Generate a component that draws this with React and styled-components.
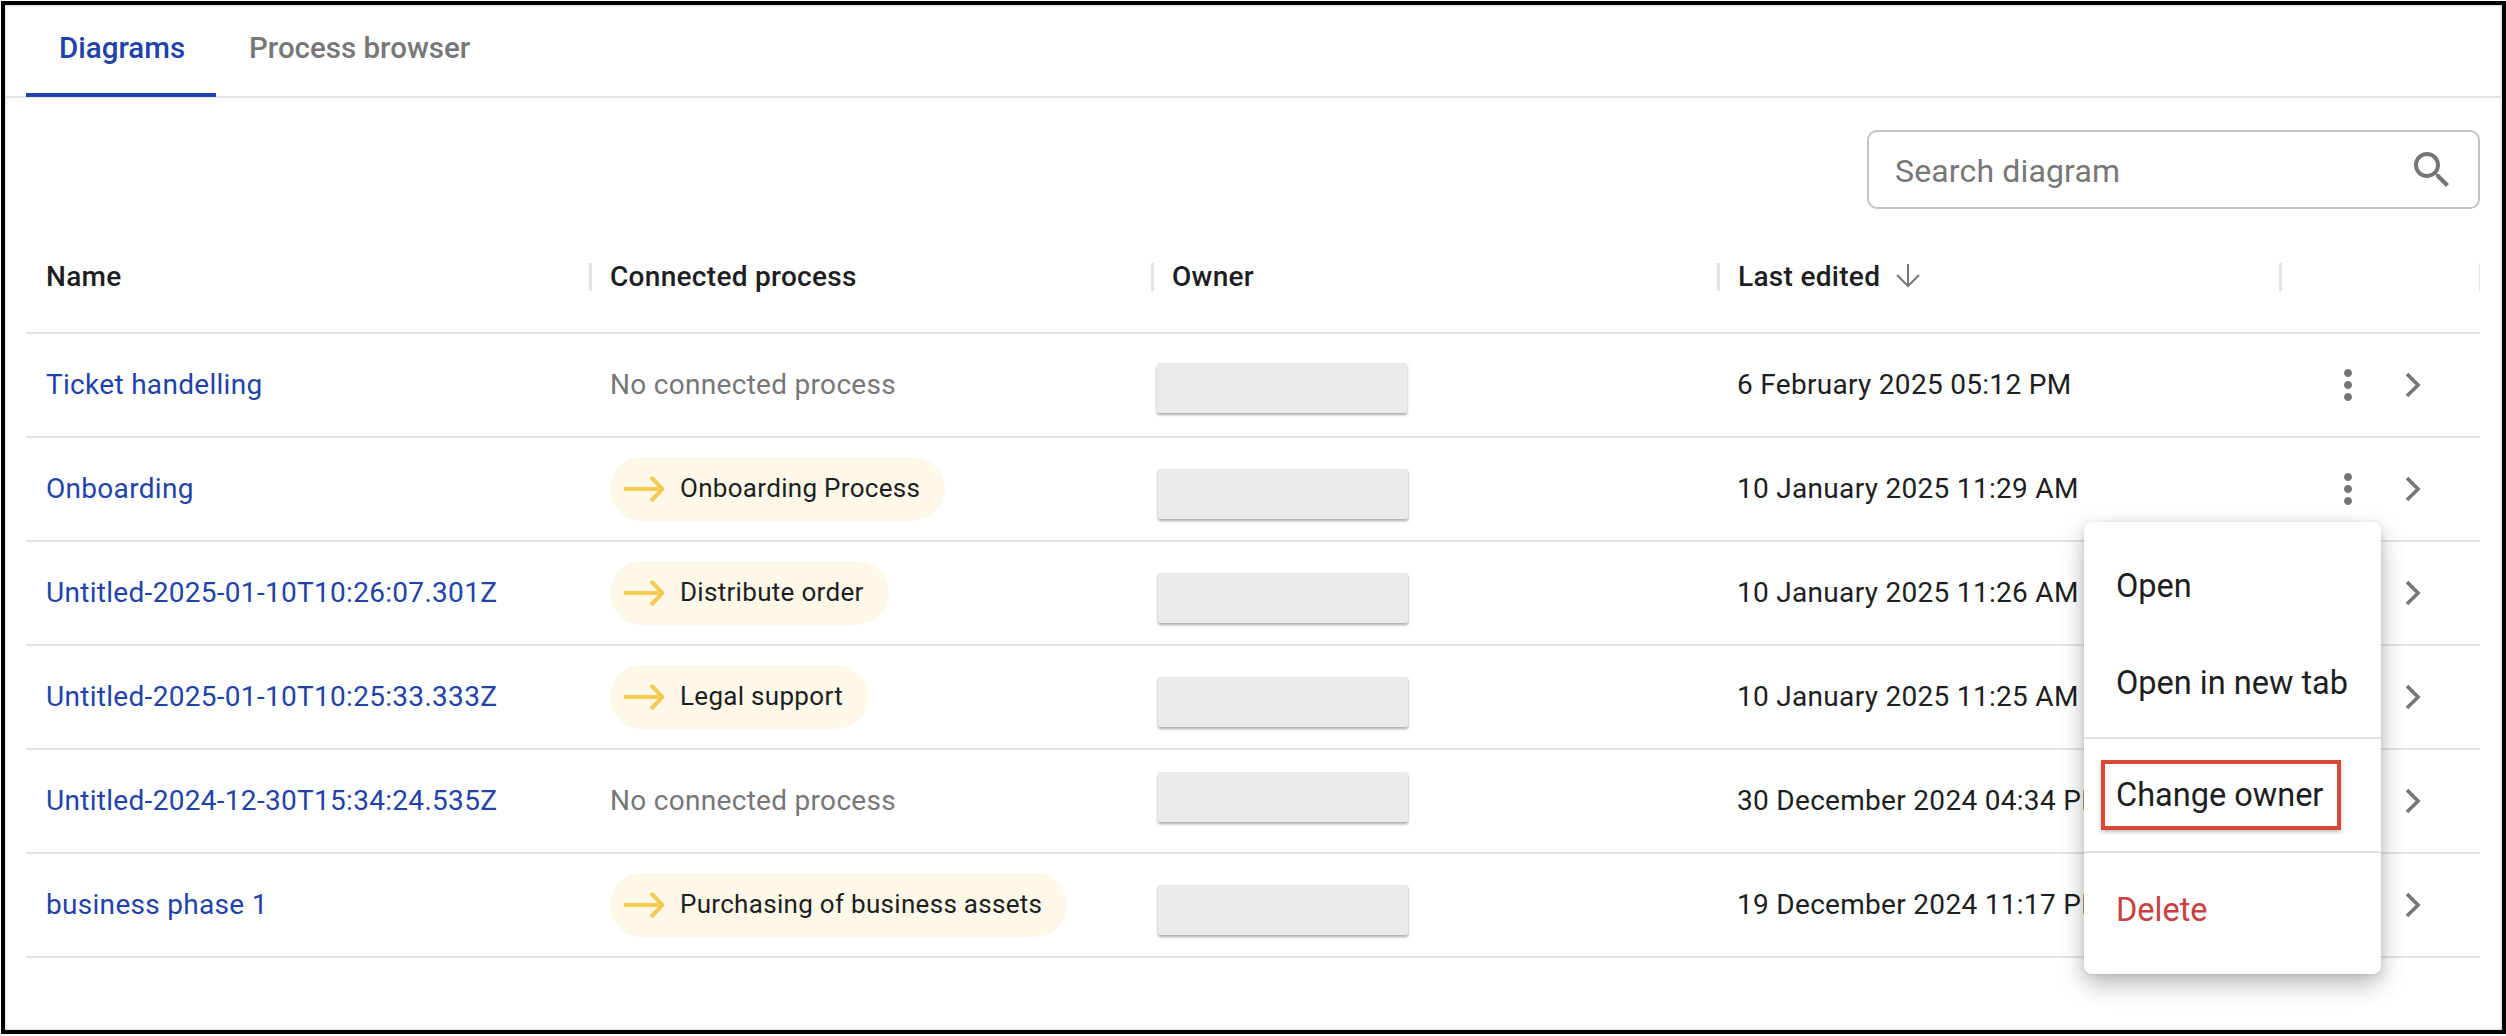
import React from "react";
import styled, { createGlobalStyle } from "styled-components";

const Global = createGlobalStyle`
  html, body { margin: 0; padding: 0; background: #fff; }
  * { box-sizing: border-box; }
  body { font-family: Roboto, "Liberation Sans", sans-serif; color: #1d1e22; overflow: hidden; }
`;

const Frame = styled.div`
  width: 2505px;
  height: 1033px;
  margin: 1px 0 0 1px;
  border: 4px solid #000;
  box-shadow: 0 2px 0 #c8c8c8, inset 0 0 3px rgba(0, 0, 0, 0.3);
  position: relative;
  overflow: visible;
`;

const TabBar = styled.div`
  display: flex;
  height: 93px;
  padding-left: 21px;
  border-bottom: 2px solid #e2e2e2;
`;

const Tab = styled.div`
  height: 92px;
  width: ${(p) => (p.$active ? "190px" : "auto")};
  padding: 0 33px 2px;
  display: flex;
  align-items: center;
  font-size: 29.5px;
  font-weight: 500;
  white-space: nowrap;
  color: ${(p) => (p.$active ? "#1f43a8" : "#777")};
  border-bottom: 4px solid ${(p) => (p.$active ? "#1f43a8" : "transparent")};
`;

const Content = styled.div`
  padding: 0 22px 0 21px;
`;

const Toolbar = styled.div`
  display: flex;
  justify-content: flex-end;
  height: 124px;
  padding-top: 32px;
`;

const SearchBox = styled.div`
  width: 613px;
  height: 79px;
  border: 2px solid #c4c4c4;
  border-radius: 10px;
  display: flex;
  align-items: center;
  justify-content: space-between;
  padding: 0 22px 0 26px;
  font-size: 32px;
  letter-spacing: 0.15px;
  color: #777;
`;

const SearchText = styled.span`
  padding-top: 2px;
`;

const Row = styled.div`
  display: grid;
  grid-template-columns: 563px 562px 566px 562px 201px;
  height: ${(p) => (p.$head ? "112px" : "104px")};
  border-bottom: 2px solid #e2e2e2;
  align-items: center;
  font-size: 28px;
  letter-spacing: 0.3px;
`;

const HeadCell = styled.div`
  height: 28px;
  padding-bottom: 2px;
  display: flex;
  align-items: center;
  gap: 16px;
  font-weight: 500;
  padding-left: ${(p) => (p.$first ? "20px" : "18px")};
  border-left: ${(p) => (p.$first ? "none" : "3px solid #e4e4e4")};
`;

const ActionHead = styled(HeadCell)`
  border-right: 1px solid #e4e4e4;
`;

const NameLink = styled.div`
  padding: 0 0 2px 20px;
  color: #1f43a8;
`;

const ProcessCell = styled.div`
  padding-left: 21px;
  display: flex;
  align-items: center;
`;

const Muted = styled.span`
  padding-bottom: 2px;
  color: #777;
`;

const Pill = styled.div`
  height: 64px;
  display: inline-flex;
  align-items: center;
  gap: 16px;
  padding: 0 25px 0 14px;
  border-radius: 32px;
  background: #fdf8e8;
  font-size: 26px;
`;

const PillLabel = styled.span`
  padding-bottom: 2px;
`;

const OwnerCell = styled.div`
  padding-left: ${(p) => 6 + (p.$nudge || 0)}px;
  align-self: start;
  padding-top: ${(p) => p.$top}px;
`;

const Redacted = styled.div`
  width: 250px;
  height: 50px;
  background: #eaeaea;
  box-shadow: 0 2px 3px rgba(0, 0, 0, 0.35);
  border-radius: 2px;
`;

const DateCell = styled.div`
  padding: 0 0 2px 20px;
  white-space: nowrap;
`;

const ActionCell = styled.div`
  display: flex;
  align-items: center;
  padding-left: 45px;
  gap: 17px;
`;

const Menu = styled.div`
  position: absolute;
  left: 2079px;
  top: 517px;
  width: 297px;
  height: 452px;
  background: #fff;
  border-radius: 8px;
  box-shadow: 0 10px 24px rgba(0, 0, 0, 0.28), 0 1px 6px rgba(0, 0, 0, 0.1);
  display: flex;
  flex-direction: column;
  font-size: 32.5px;
`;

const MenuGroup = styled.div`
  height: ${(p) => p.$h}px;
  padding-top: ${(p) => p.$pad || 0}px;
  border-bottom: ${(p) => (p.$line ? "2px solid #e2e2e2" : "none")};
  display: flex;
  flex-direction: column;
`;

const MenuItem = styled.div`
  height: ${(p) => p.$h || 97}px;
  padding-left: 32px;
  display: flex;
  align-items: center;
  color: ${(p) => (p.$danger ? "#c94040" : "#1d1e22")};
  position: relative;
`;

const Highlight = styled.div`
  position: absolute;
  left: 17px;
  top: 21px;
  width: 240px;
  height: 70px;
  border: 4px solid #d94a34;
  box-shadow: 0 2px 4px rgba(0, 0, 0, 0.25);
`;

const ArrowRight = () => (
  <svg width="40" height="26" viewBox="0 0 40 26" fill="none" stroke="#f4cb52" strokeWidth="4">
    <path d="M0 13H38" />
    <path d="M27 1L38.5 13L27 25" />
  </svg>
);

const ArrowDown = () => (
  <svg width="24" height="24" viewBox="0 0 24 24" fill="none" stroke="#777" strokeWidth="2">
    <path d="M12 0V22" />
    <path d="M1 11L12 22L23 11" />
  </svg>
);

const Kebab = () => (
  <svg width="48" height="48" viewBox="0 0 24 24" fill="#757575">
    <path d="M12 8c1.1 0 2-.9 2-2s-.9-2-2-2-2 .9-2 2 .9 2 2 2zm0 2c-1.1 0-2 .9-2 2s.9 2 2 2 2-.9 2-2-.9-2-2-2zm0 6c-1.1 0-2 .9-2 2s.9 2 2 2 2-.9 2-2-.9-2-2-2z" />
  </svg>
);

const Chevron = () => (
  <svg width="48" height="48" viewBox="0 0 48 48" fill="none" stroke="#757575" strokeWidth="3.6">
    <path d="M18 13L29 24L18 35" />
  </svg>
);

const SearchIcon = () => (
  <svg width="48" height="48" viewBox="0 0 24 24" fill="#757575">
    <path d="M15.5 14h-.79l-.28-.27C15.41 12.59 16 11.11 16 9.5 16 5.91 13.09 3 9.5 3S3 5.91 3 9.5 5.91 16 9.5 16c1.61 0 3.09-.59 4.23-1.57l.27.28v.79l5 4.99L20.49 19l-4.99-5zm-6 0C7.01 14 5 11.99 5 9.5S7.01 5 9.5 5 14 7.01 14 9.5 11.99 14 9.5 14z" />
  </svg>
);

const rows = [
  { name: "Ticket handelling", process: null, date: "6 February 2025 05:12 PM", top: 29, nudge: 0 },
  { name: "Onboarding", process: "Onboarding Process", date: "10 January 2025 11:29 AM", top: 31, nudge: 1 },
  { name: "Untitled-2025-01-10T10:26:07.301Z", process: "Distribute order", date: "10 January 2025 11:26 AM", top: 31, nudge: 1 },
  { name: "Untitled-2025-01-10T10:25:33.333Z", process: "Legal support", date: "10 January 2025 11:25 AM", top: 31, nudge: 1 },
  { name: "Untitled-2024-12-30T15:34:24.535Z", process: null, date: "30 December 2024 04:34 PM", top: 22, nudge: 1 },
  { name: "business phase 1", process: "Purchasing of business assets", date: "19 December 2024 11:17 PM", top: 31, nudge: 1 },
];

export default function App() {
  return (
    <>
      <Global />
      <Frame>
        <TabBar>
          <Tab $active>Diagrams</Tab>
          <Tab>Process browser</Tab>
        </TabBar>
        <Content>
          <Toolbar>
            <SearchBox>
              <SearchText>Search diagram</SearchText>
              <SearchIcon />
            </SearchBox>
          </Toolbar>
          <Row $head>
            <HeadCell $first>Name</HeadCell>
            <HeadCell>Connected process</HeadCell>
            <HeadCell>Owner</HeadCell>
            <HeadCell>
              Last edited
              <ArrowDown />
            </HeadCell>
            <ActionHead />
          </Row>
          {rows.map((r) => (
            <Row key={r.name}>
              <NameLink>{r.name}</NameLink>
              <ProcessCell>
                {r.process ? (
                  <Pill>
                    <ArrowRight />
                    <PillLabel>{r.process}</PillLabel>
                  </Pill>
                ) : (
                  <Muted>No connected process</Muted>
                )}
              </ProcessCell>
              <OwnerCell $top={r.top} $nudge={r.nudge}>
                <Redacted />
              </OwnerCell>
              <DateCell>{r.date}</DateCell>
              <ActionCell>
                <Kebab />
                <Chevron />
              </ActionCell>
            </Row>
          ))}
        </Content>
        <Menu>
          <MenuGroup $h={217} $pad={15} $line>
            <MenuItem>Open</MenuItem>
            <MenuItem>Open in new tab</MenuItem>
          </MenuGroup>
          <MenuGroup $h={114} $line>
            <MenuItem $h={112}>
              <Highlight />
              Change owner
            </MenuItem>
          </MenuGroup>
          <MenuGroup $h={121}>
            <MenuItem $h={113} $danger>Delete</MenuItem>
          </MenuGroup>
        </Menu>
      </Frame>
    </>
  );
}
